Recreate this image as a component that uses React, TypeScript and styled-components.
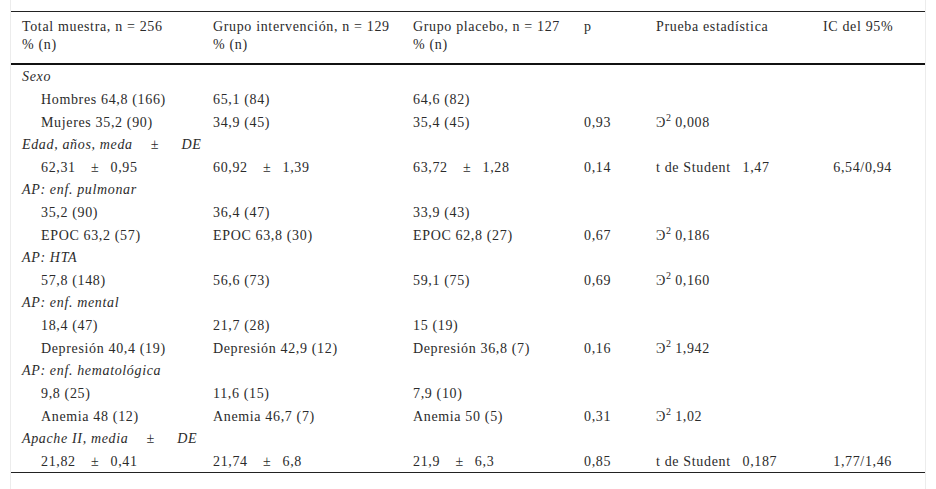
import React from "react";
import styled, { createGlobalStyle } from "styled-components";

type Cell = string | { chi: string };

interface Row {
  kind: "group" | "data";
  cells?: Cell[];
  label?: string;
}

// spacing used around the ± sign, as in the source table
const pm = (a: string, b: string) => `${a}\u2002\u2002±\u2002\u2009${b}`;
const pmHead = (a: string) => `${a}\u2003\u2009±\u2003\u2002DE`;

const rows: Row[] = [
  { kind: "group", label: "Sexo" },
  { kind: "data", cells: ["Hombres 64,8 (166)", "65,1 (84)", "64,6 (82)", "", "", ""] },
  { kind: "data", cells: ["Mujeres 35,2 (90)", "34,9 (45)", "35,4 (45)", "0,93", { chi: "0,008" }, ""] },
  { kind: "group", label: pmHead("Edad, años, meda") },
  {
    kind: "data",
    cells: [pm("62,31", "0,95"), pm("60,92", "1,39"), pm("63,72", "1,28"), "0,14", "t de Student\u2002 1,47", "6,54/0,94"],
  },
  { kind: "group", label: "AP: enf. pulmonar" },
  { kind: "data", cells: ["35,2 (90)", "36,4 (47)", "33,9 (43)", "", "", ""] },
  { kind: "data", cells: ["EPOC 63,2 (57)", "EPOC 63,8 (30)", "EPOC 62,8 (27)", "0,67", { chi: "0,186" }, ""] },
  { kind: "group", label: "AP: HTA" },
  { kind: "data", cells: ["57,8 (148)", "56,6 (73)", "59,1 (75)", "0,69", { chi: "0,160" }, ""] },
  { kind: "group", label: "AP: enf. mental" },
  { kind: "data", cells: ["18,4 (47)", "21,7 (28)", "15 (19)", "", "", ""] },
  {
    kind: "data",
    cells: ["Depresión 40,4 (19)", "Depresión 42,9 (12)", "Depresión 36,8 (7)", "0,16", { chi: "1,942" }, ""],
  },
  { kind: "group", label: "AP: enf. hematológica" },
  { kind: "data", cells: ["9,8 (25)", "11,6 (15)", "7,9 (10)", "", "", ""] },
  { kind: "data", cells: ["Anemia 48 (12)", "Anemia 46,7 (7)", "Anemia 50 (5)", "0,31", { chi: "1,02" }, ""] },
  { kind: "group", label: pmHead("Apache II, media") },
  {
    kind: "data",
    cells: [pm("21,82", "0,41"), pm("21,74", "6,8"), pm("21,9", "6,3"), "0,85", "t de Student\u2002 0,187", "1,77/1,46"],
  },
];

const headers = [
  ["Total muestra, n = 256", "% (n)"],
  ["Grupo intervención, n = 129", "% (n)"],
  ["Grupo placebo, n = 127", "% (n)"],
  ["p", ""],
  ["Prueba estadística", ""],
  ["IC del 95%", ""],
];

const widths = [191, 200, 171, 72, 167, 113];

const App = () => {
  return (
    <>
      <GlobalStyle />
      <Frame>
        <Table>
          <colgroup>
            {widths.map((w, i) => (
              <col key={i} style={{ width: w }} />
            ))}
          </colgroup>
          <thead>
            <tr>
              {headers.map((h, i) => (
                <HeadCell key={i}>
                  {h[0]}
                  <br />
                  {h[1] || "\u00a0"}
                </HeadCell>
              ))}
            </tr>
          </thead>
          <tbody>
            {rows.map((row, i) =>
              row.kind === "group" ? (
                <tr key={i}>
                  <GroupCell colSpan={6}>{row.label}</GroupCell>
                </tr>
              ) : (
                <tr key={i}>
                  {row.cells!.map((c, j) => (
                    <DataCell key={j} $indent={j === 0} $last={j === 5}>
                      {typeof c === "string" ? (
                        c
                      ) : (
                        <>
                          Ͽ<sup>2</sup> {c.chi}
                        </>
                      )}
                    </DataCell>
                  ))}
                </tr>
              )
            )}
          </tbody>
        </Table>
      </Frame>
    </>
  );
};

export default App;

const serif = `"Liberation Serif", "Times New Roman", serif`;

const GlobalStyle = createGlobalStyle`
  body {
    margin: 0;
    background: #ffffff;
    font-family: ${serif};
    color: #2b2b2b;
  }
`;

const Frame = styled.div`
  width: 916px;
  height: 489px;
  margin-left: 10px;
  padding-top: 11px;
  box-sizing: border-box;
  border-left: 1px solid #ececec;
  border-right: 1px solid #ececec;
`;

const Table = styled.table`
  width: 914px;
  border-collapse: collapse;
  table-layout: fixed;
  font-family: ${serif};
  font-size: 14px;
  letter-spacing: 0.65px;
  color: #2b2b2b;
  border-top: 1px solid #222;
  border-bottom: 1px solid #222;
`;

const HeadCell = styled.th`
  text-align: left;
  font-weight: normal;
  vertical-align: top;
  padding: 6px 0 9px 11px;
  line-height: 18px;
  border-bottom: 2px solid #111;
  white-space: nowrap;
`;

const GroupCell = styled.td`
  font-style: italic;
  padding: 2px 11px 0;
  height: 20px;
  line-height: 20px;
  white-space: pre;
`;

const DataCell = styled.td<{ $indent?: boolean; $last?: boolean }>`
  padding: 3px ${(p) => (p.$last ? "33px" : "0")} 0 ${(p) => (p.$indent ? "30px" : p.$last ? "0" : "11px")};
  text-align: ${(p) => (p.$last ? "right" : "left")};
  height: 20px;
  line-height: 20px;
  white-space: pre;
  vertical-align: bottom;

  sup {
    font-size: 10px;
    letter-spacing: 0;
    line-height: 0;
    vertical-align: 6px;
  }
`;
